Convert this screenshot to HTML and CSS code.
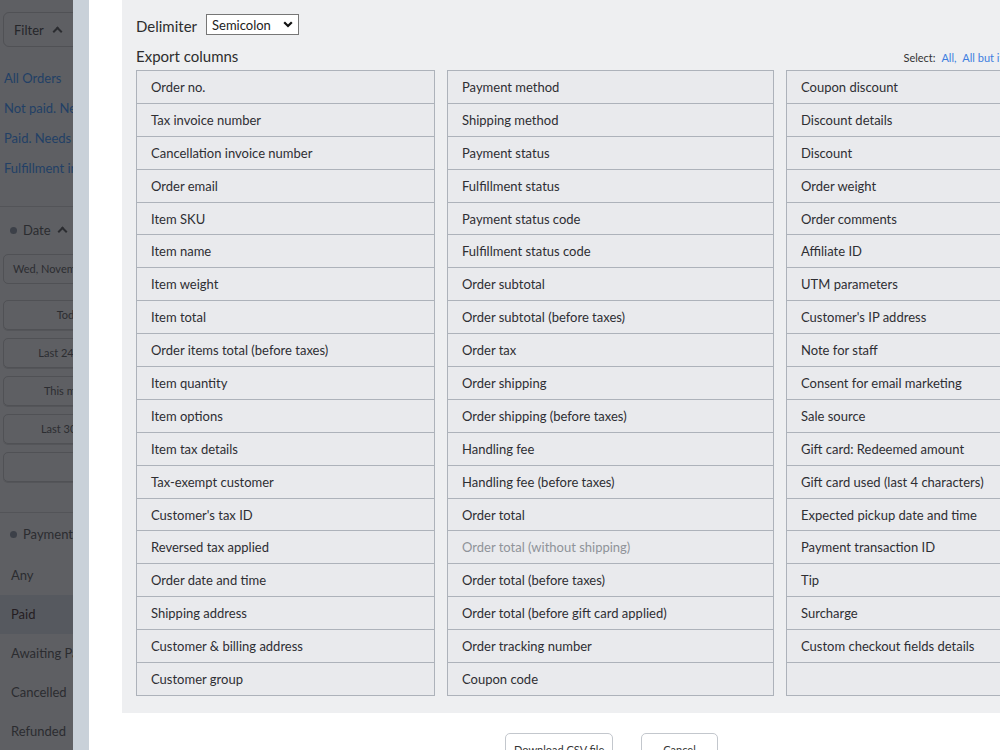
FILE: index.html
```html
<!DOCTYPE html>
<html lang="en">
<head>
  <meta charset="UTF-8" />
  <title>Export orders</title>
  <link rel="stylesheet" href="styles.css">
</head>
<body>
  <div class="page">
    <aside class="sidebar">
      <div class="sidebar-inner">
        <button class="filter-btn">Filter <span class="chev"></span></button>
        <ul class="quick-links">
          <li>All Orders</li>
          <li>Not paid. Needs attention</li>
          <li>Paid. Needs fulfillment</li>
          <li>Fulfillment in progress</li>
        </ul>
        <div class="group">
          <div class="group-title"><span class="dot"></span>Date <span class="chev"></span></div>
          <div class="date-input">Wed, November 1</div>
          <div class="range-btn">Today</div>
          <div class="range-btn">Last 24 hours</div>
          <div class="range-btn">This month</div>
          <div class="range-btn">Last 30 days</div>
          <div class="range-btn"></div>
        </div>
        <div class="group">
          <div class="group-title"><span class="dot"></span>Payment status</div>
          <ul class="status-list">
            <li>Any</li>
            <li class="active">Paid</li>
            <li>Awaiting Payment</li>
            <li>Cancelled</li>
            <li>Refunded</li>
          </ul>
        </div>
      </div>
    </aside>

    <div class="modal">
      <div class="panel">
        <div class="delimiter-row">
          <label>Delimiter</label>
          <div class="select">Semicolon
            <svg width="10" height="7" viewBox="0 0 10 7"><path d="M1.2 1.2 L5 5 L8.8 1.2" fill="none" stroke="#111" stroke-width="2.2"/></svg>
          </div>
        </div>
        <div class="columns-head">
          <h3>Export columns</h3>
          <div class="select-links">Select: <a>All,</a> <a>All but items</a></div>
        </div>
        <div class="columns">
          <ul class="col">
            <li>Order no.</li>
            <li>Tax invoice number</li>
            <li>Cancellation invoice number</li>
            <li>Order email</li>
            <li>Item SKU</li>
            <li>Item name</li>
            <li>Item weight</li>
            <li>Item total</li>
            <li>Order items total (before taxes)</li>
            <li>Item quantity</li>
            <li>Item options</li>
            <li>Item tax details</li>
            <li>Tax-exempt customer</li>
            <li>Customer's tax ID</li>
            <li>Reversed tax applied</li>
            <li>Order date and time</li>
            <li>Shipping address</li>
            <li>Customer &amp; billing address</li>
            <li>Customer group</li>
          </ul>
          <ul class="col">
            <li>Payment method</li>
            <li>Shipping method</li>
            <li>Payment status</li>
            <li>Fulfillment status</li>
            <li>Payment status code</li>
            <li>Fulfillment status code</li>
            <li>Order subtotal</li>
            <li>Order subtotal (before taxes)</li>
            <li>Order tax</li>
            <li>Order shipping</li>
            <li>Order shipping (before taxes)</li>
            <li>Handling fee</li>
            <li>Handling fee (before taxes)</li>
            <li>Order total</li>
            <li class="disabled">Order total (without shipping)</li>
            <li>Order total (before taxes)</li>
            <li>Order total (before gift card applied)</li>
            <li>Order tracking number</li>
            <li>Coupon code</li>
          </ul>
          <ul class="col">
            <li>Coupon discount</li>
            <li>Discount details</li>
            <li>Discount</li>
            <li>Order weight</li>
            <li>Order comments</li>
            <li>Affiliate ID</li>
            <li>UTM parameters</li>
            <li>Customer's IP address</li>
            <li>Note for staff</li>
            <li>Consent for email marketing</li>
            <li>Sale source</li>
            <li>Gift card: Redeemed amount</li>
            <li>Gift card used (last 4 characters)</li>
            <li>Expected pickup date and time</li>
            <li>Payment transaction ID</li>
            <li>Tip</li>
            <li>Surcharge</li>
            <li>Custom checkout fields details</li>
            <li></li>
          </ul>
        </div>
      </div>
      <div class="actions">
        <button class="btn">Download CSV file</button>
        <button class="btn">Cancel</button>
      </div>
    </div>
  </div>
</body>
</html>
```

FILE: styles.css
```css
html, body {
  margin: 0;
  height: 100%;
  overflow: hidden;
}

body {
  font-family: Lato, "Open Sans", sans-serif;
  color: #333;
  background: #fff;
}

ul {
  list-style: none;
  margin: 0;
  padding: 0;
}

.page {
  display: flex;
  height: 750px;
}

/* dimmed page behind the dialog */
.sidebar {
  width: 73px;
  flex: none;
  overflow: hidden;
  background: #5e5f63;
  color: #2b2c30;
  font-size: 13px;
}

.sidebar-inner {
  width: 200px;
  padding: 12px 0 0 3px;
}

.filter-btn {
  display: flex;
  align-items: center;
  gap: 10px;
  width: 120px;
  height: 35px;
  padding: 0 10px;
  background: #5e5f63;
  border: 1px solid #505155;
  border-radius: 6px;
  font: 13px Lato, sans-serif;
  color: #25262a;
}

.chev {
  display: inline-block;
  width: 5px;
  height: 5px;
  border-left: 2px solid #2b2c30;
  border-top: 2px solid #2b2c30;
  transform: rotate(45deg);
  margin-top: 3px;
}

.quick-links {
  margin-top: 16px;
  margin-left: 1px;
}

.quick-links li {
  height: 30px;
  line-height: 30px;
  color: #223f66;
  white-space: nowrap;
}

.group {
  border-top: 1px solid #535458;
  margin-top: 23px;
  margin-left: -3px;
  padding: 13px 0 0 3px;
}

.group-title {
  display: flex;
  align-items: center;
  gap: 6px;
  height: 20px;
  padding-left: 7px;
  white-space: nowrap;
}

.group-title .chev {
  margin-left: 2px;
}

.dot {
  width: 7px;
  height: 7px;
  border-radius: 50%;
  background: #3c4048;
}

.date-input {
  margin-top: 14px;
  height: 28px;
  line-height: 28px;
  padding-left: 9px;
  border: 1px solid #505155;
  border-radius: 5px;
  font-size: 11px;
  color: #2c2d31;
  white-space: nowrap;
}

.range-btn {
  height: 28px;
  line-height: 28px;
  text-align: center;
  padding-right: 64px;
  border: 1px solid #505155;
  border-radius: 5px;
  box-shadow: 0 1px 0 #545559;
  font-size: 11px;
  color: #2c2d31;
  white-space: nowrap;
}

.date-input + .range-btn {
  margin-top: 16px;
}

.range-btn + .range-btn {
  margin-top: 8px;
}

.group + .group {
  margin-top: 30px;
  padding-top: 11px;
}

.status-list {
  margin-top: 12px;
  margin-left: -3px;
}

.status-list li {
  height: 39px;
  line-height: 39px;
  padding-left: 11px;
  white-space: nowrap;
}

.status-list li.active {
  background: #56595f;
  color: #251d22;
}

/* dialog */
.modal {
  flex: none;
  width: 1100px;
  border-left: 16px solid #c9d1d9;
  padding-left: 33px;
  background: #fff;
}

.panel {
  background: #eeeff1;
  padding: 14px 14px 18px 14px;
  height: 681px;
}

.delimiter-row {
  display: flex;
  align-items: center;
  gap: 9px;
}

.delimiter-row label {
  font-size: 15px;
  color: #2d2d2d;
  padding-top: 2px;
}

.select {
  display: flex;
  align-items: center;
  gap: 12px;
  height: 19px;
  padding: 0 5px;
  background: #fff;
  border: 1px solid #767676;
  font-size: 13px;
  color: #222;
}

.columns-head {
  display: flex;
  justify-content: space-between;
  align-items: flex-end;
  margin-top: 12px;
  width: 887px;
}

.columns-head h3 {
  margin: 0;
  font-weight: normal;
  font-size: 15px;
  color: #2d2d2d;
}

.select-links {
  font-size: 11px;
  color: #333;
  white-space: nowrap;
  padding-bottom: 1px;
}

.select-links a {
  color: #3d7ee0;
  margin-left: 3px;
}

.columns {
  display: grid;
  grid-template-columns: 299px 327px 300px;
  gap: 12px;
  margin-top: 5px;
}

.col {
  border: 1px solid #adb2ba;
  background: #e9eaed;
}

.col li {
  height: 29.9px;
  line-height: 29.9px;
  padding: 2px 0 0 14px;
  font-size: 13px;
  color: #2e2e33;
  white-space: nowrap;
}

.col li + li {
  border-top: 1px solid #adb2ba;
}

.col li.disabled {
  color: #8f9399;
}

.actions {
  display: flex;
  gap: 28px;
  padding: 20px 0 0 383px;
}

.btn {
  height: 32px;
  padding: 0 8px;
  background: #fff;
  border: 1px solid #c3c7cd;
  border-radius: 5px;
  font: 11px Lato, sans-serif;
  color: #333;
}

.btn + .btn {
  padding: 0 21px;
}
```
